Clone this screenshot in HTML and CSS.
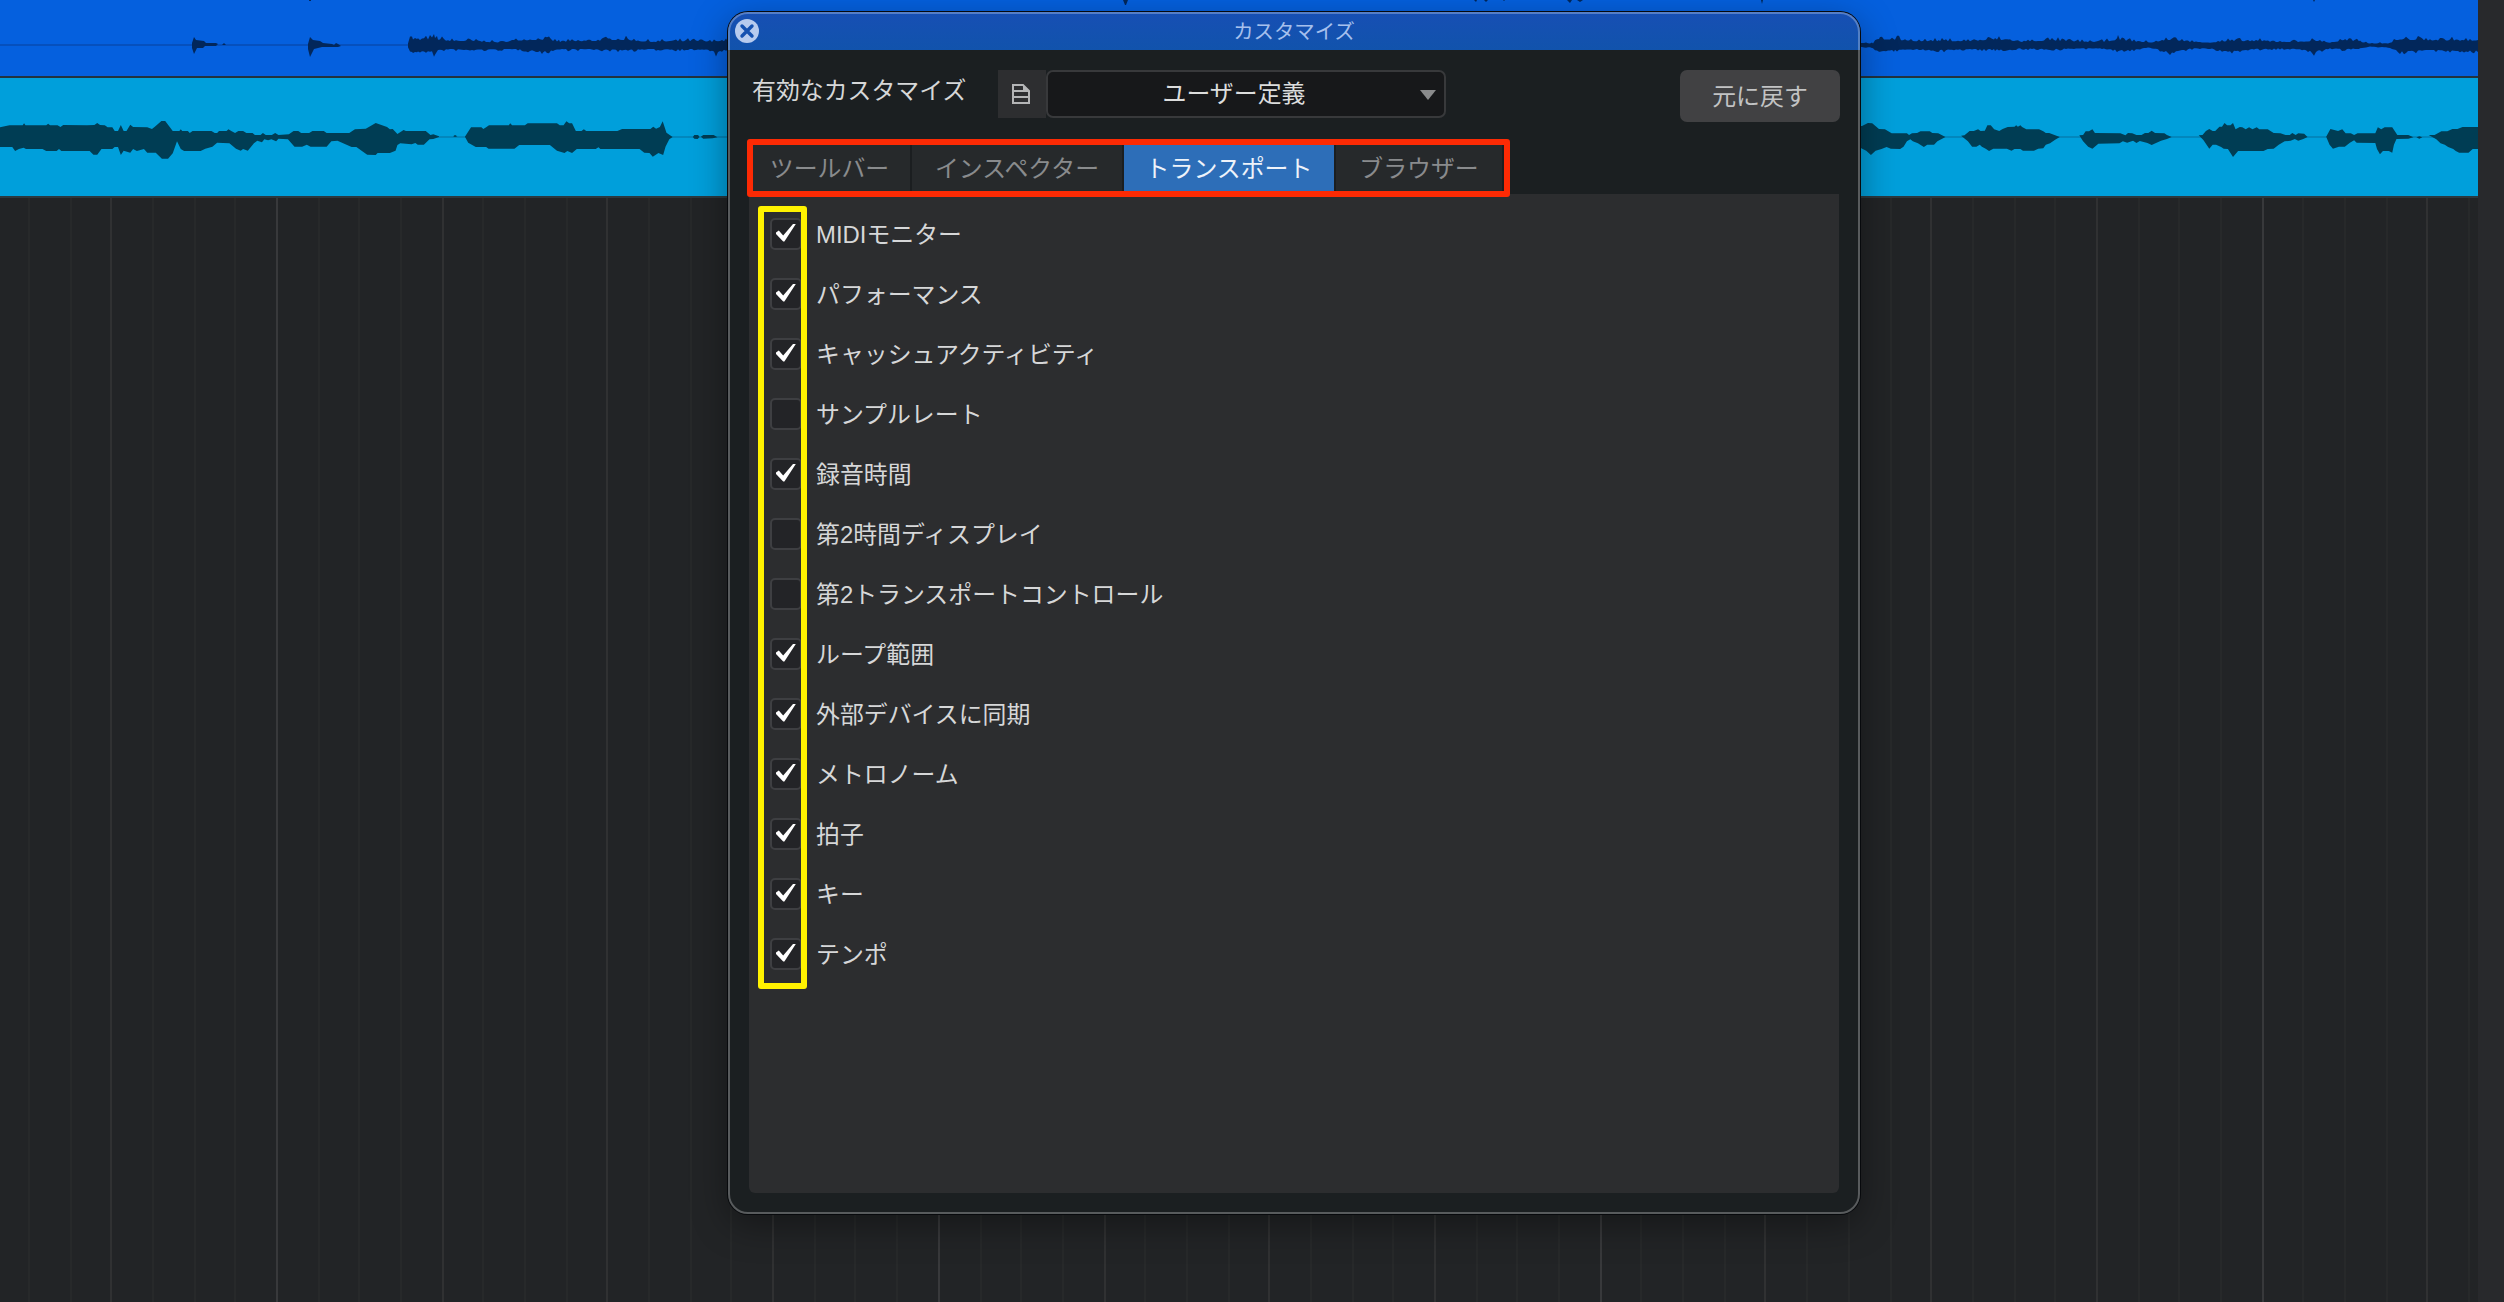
FILE: index.html
```
<!DOCTYPE html>
<html lang="ja">
  <head>
    <meta charset="utf-8">
    <title>カスタマイズ</title>
    <link rel="stylesheet" href="styles.css">
  </head>
  <body onload="start()">
    <svg class="symbols" width="0" height="0">
      <symbol id="check" viewBox="0 0 28 28">
        <path d="M4 12.4 L6.8 10.6 L11.2 15.6 L21 4 L23.8 4 L12.4 21.4 L11.2 21.4 L4 14 Z" fill="#fff"/>
      </symbol>
    </svg>

    <div id="arranger">
      <svg id="grid" width="2478" height="1302"></svg>
      <div class="track track_blue"></div>
      <div class="track track_cyan"></div>
      <div class="scroll_strip"></div>
      <svg id="waves" width="2478" height="198">
        <path d="M0 45 H2478" stroke="#0650bd" stroke-width="2"/>
        <path d="M0 137 H2478" stroke="#0287bd" stroke-width="2"/>
        <path id="noise" fill="#02275b"/>
        <g fill="#02275b">
          <path d="M192 43 L194 37 L196 40 L204 41 L206 43 L216 43 L218 44 L216 46 L205 46 L203 48 L197 48 L194 54 L192 48 Z"/>
          <path d="M222 45 L224 43 L226 45 Z"/>
          <path d="M308 44 L310 37 L313 40 L320 41 L323 43 L332 44 L334 45 L336 43 L338 44 L341 46 L338 47 L322 47 L314 49 L310 57 L308 49 Z"/>
          <path d="M309 0 h2 v1 h-2 Z M1123 0 h5 l-2 5 h-1 Z M1474 0 h3 l-1 2 Z M1484 0 h4 l-2 2 Z M1503 0 h2 l-1 1 Z M1567 0 h5 l-2 3 Z M1577 0 h6 l-3 2 Z M1761 0 h2 l-1 4 Z M2313 0 h2 l-1 2 Z"/>
        </g>
        <g fill="#003d54">
          <g transform="scale(.472 .3333)">
            <path d="M0 382 L20 376 48 376 51 370 54 376 98 376 102 371 106 376 122 376 128 381 134 375 184 376 200 375 206 369 212 375 222 376 228 382 238 382 243 393 250 393 256 375 262 393 268 393 276 374 282 381 312 382 322 387 328 380 342 363 350 363 366 393 380 393 383 388 386 393 398 393 402 399 408 393 448 393 455 399 460 399 464 393 480 393 484 388 490 393 498 399 505 393 515 393 522 399 535 399 540 405 552 405 557 399 563 405 576 405 583 399 590 405 612 403 622 393 632 393 638 399 655 399 662 393 686 393 692 399 740 399 752 388 775 386 796 369 820 381 826 388 832 387 842 402 855 390 860 393 902 393 912 405 918 403 930 409 930 411 918 417 910 418 898 434 885 434 880 429 872 433 848 430 842 435 838 452 826 459 800 459 796 465 778 464 755 441 745 441 715 422 702 424 692 440 658 440 650 434 640 440 624 440 610 418 590 416 585 424 575 418 568 421 560 418 555 427 545 422 538 430 525 452 515 447 510 452 500 446 486 430 460 428 450 440 435 446 425 453 390 453 383 447 375 424 366 460 356 476 343 476 330 458 312 458 305 447 290 453 282 447 276 458 262 452 256 465 250 441 243 441 238 447 215 447 206 464 198 464 190 453 130 453 125 447 120 453 98 453 90 447 55 447 50 443 40 447 32 453 26 441 0 441 Z"/>
            <path d="M960 409 L964 405 969 409 964 411 Z"/>
            <path d="M985 410 L998 382 1020 382 1024 387 1030 382 1036 376 1078 376 1081 370 1085 376 1112 376 1118 370 1180 370 1186 376 1194 376 1200 364 1206 370 1212 370 1220 393 1232 393 1237 388 1242 393 1308 393 1318 387 1378 387 1384 380 1390 386 1398 381 1404 364 1412 398 1425 411 1418 418 1410 440 1405 465 1395 459 1383 470 1376 459 1365 458 1355 447 1272 447 1268 442 1262 447 1222 447 1212 459 1202 453 1196 459 1180 452 1165 435 1100 435 1090 446 1035 446 1030 441 1008 441 992 428 Z"/>
            <path d="M1468 411 L1471 405 1479 405 1482 411 1478 417 1471 416 Z M1485 410 L1490 405 1512 405 1520 412 1510 415 1490 416 Z"/>
          </g>
          <g transform="translate(1840) scale(.4235 .3333)">
            <path d="M40 378 L52 378 66 369 76 370 92 387 106 388 122 400 158 400 163 405 170 400 182 399 190 394 212 394 218 399 232 400 249 411 230 424 222 434 206 434 198 441 184 430 172 424 166 418 158 424 150 440 142 447 120 446 110 441 98 447 84 452 73 465 62 452 50 445 Z"/>
            <path d="M286 407 L294 406 306 393 316 393 326 388 332 393 342 392 348 376 356 376 364 388 376 393 384 387 396 381 412 380 416 376 420 380 426 376 430 381 440 388 470 388 480 394 486 399 494 399 508 406 519 411 508 419 496 430 486 434 480 445 468 446 458 452 432 452 426 447 412 447 405 452 394 446 362 446 352 453 344 446 335 440 330 434 322 440 312 440 302 424 Z"/>
            <path d="M565 406 L574 405 580 394 588 394 596 388 602 399 662 400 674 406 680 399 690 400 700 405 712 405 720 399 728 399 736 392 744 399 766 400 772 405 783 411 772 417 758 422 745 430 736 435 726 429 708 423 700 429 692 422 678 428 668 424 660 430 610 431 596 446 586 440 574 424 Z"/>
            <path d="M847 406 L856 405 864 393 872 387 880 393 886 393 896 380 902 380 908 369 914 376 922 376 928 369 934 388 944 381 950 382 958 388 966 382 974 388 984 382 990 388 1010 388 1024 399 1040 400 1052 405 1062 405 1068 399 1076 405 1082 400 1096 401 1104 411 1094 417 1082 422 1074 417 1064 422 1050 424 1036 434 1024 446 1010 447 1000 453 940 453 928 471 916 447 906 446 900 441 888 434 880 434 872 446 858 420 Z"/>
            <path d="M1148 410 L1158 387 1176 393 1186 388 1194 400 1206 400 1214 405 1222 400 1264 400 1270 382 1278 388 1286 382 1304 382 1316 405 1342 405 1354 412 1342 416 1314 417 1308 434 1304 458 1296 453 1282 453 1275 463 1268 447 1264 429 1220 428 1214 421 1204 428 1192 440 1178 440 1164 446 1156 434 Z"/>
            <path d="M1361 412 L1368 409 1375 412 1368 416 Z"/>
            <path d="M1390 405 L1404 405 1420 394 1434 394 1446 387 1458 387 1470 381 1507 381 1507 447 1494 447 1484 458 1462 458 1454 453 1448 447 1436 441 1428 434 1418 430 1408 418 Z"/>
          </g>
        </g>
      </svg>
    </div>

    <div id="dialog">
      <div class="titlebar">
        <svg class="close" width="24" height="24" viewBox="0 0 24 24">
          <circle cx="12" cy="12" r="12" fill="#b7cbee"/>
          <path d="M7 7 L17 17 M17 7 L7 17" stroke="#1551b0" stroke-width="3.4" stroke-linecap="round"/>
        </svg>
        <span>カスタマイズ</span>
      </div>
      <div class="header">
        <span class="header_label">有効なカスタマイズ</span>
        <div class="preset_menu">
          <svg width="18" height="20" viewBox="0 0 18 20" fill="none" stroke="#b4b5b6" stroke-width="2">
            <path d="M1 1 H11 L17 7 V19 H1 Z M1 13 H17 M1 7 H17"/>
            <path d="M11 1 V7 H17 Z" fill="#b4b5b6" stroke="none"/>
          </svg>
        </div>
        <div class="preset">
          <span>ユーザー定義</span>
          <svg class="arrow" width="16" height="10" viewBox="0 0 16 10"><path d="M0 0 H16 L8 10 Z" fill="#8a8b8c"/></svg>
        </div>
        <div class="reset">元に戻す</div>
      </div>
      <div class="tabs">
        <div class="tab tab_toolbar">ツールバー</div>
        <div class="tab tab_inspector">インスペクター</div>
        <div class="tab tab_transport active">トランスポート</div>
        <div class="tab tab_browser">ブラウザー</div>
        <div class="mark mark_red"></div>
      </div>
      <div class="list">
        <div class="option"><span class="box"><svg><use href="#check"/></svg></span><span class="name">MIDIモニター</span></div>
        <div class="option"><span class="box"><svg><use href="#check"/></svg></span><span class="name">パフォーマンス</span></div>
        <div class="option"><span class="box"><svg><use href="#check"/></svg></span><span class="name">キャッシュアクティビティ</span></div>
        <div class="option"><span class="box"></span><span class="name">サンプルレート</span></div>
        <div class="option"><span class="box"><svg><use href="#check"/></svg></span><span class="name">録音時間</span></div>
        <div class="option"><span class="box"></span><span class="name">第2時間ディスプレイ</span></div>
        <div class="option"><span class="box"></span><span class="name">第2トランスポートコントロール</span></div>
        <div class="option"><span class="box"><svg><use href="#check"/></svg></span><span class="name">ループ範囲</span></div>
        <div class="option"><span class="box"><svg><use href="#check"/></svg></span><span class="name">外部デバイスに同期</span></div>
        <div class="option"><span class="box"><svg><use href="#check"/></svg></span><span class="name">メトロノーム</span></div>
        <div class="option"><span class="box"><svg><use href="#check"/></svg></span><span class="name">拍子</span></div>
        <div class="option"><span class="box"><svg><use href="#check"/></svg></span><span class="name">キー</span></div>
        <div class="option"><span class="box"><svg><use href="#check"/></svg></span><span class="name">テンポ</span></div>
        <div class="mark mark_yellow"></div>
      </div>
    </div>
    <script>
      const beat = 41.3625;
      const center = 45;

      // x, height above and below the center line
      const envelope = [
        [408, 2, 2], [410, 11, 8], [413, 7, 8], [418, 6, 8], [432, 8, 7], [435, 9, 12], [438, 7, 6],
        [450, 5, 5], [470, 5, 6], [500, 3, 5], [520, 6, 5], [543, 7, 8], [560, 4, 5], [590, 5, 5],
        [620, 7, 6], [650, 4, 5], [690, 5, 5], [712, 4, 6], [716, 5, 10], [722, 5, 6], [740, 4, 6],
        [1850, 3, 2], [1873, 2, 3], [1880, 7, 8], [1895, 7, 6], [1915, 5, 5], [1940, 5, 6], [1970, 5, 5],
        [1995, 7, 5], [2010, 6, 6], [2020, 4, 4], [2050, 6, 5], [2080, 4, 4], [2105, 4, 4], [2118, 7, 6],
        [2130, 5, 6], [2150, 3, 3], [2172, 7, 9], [2190, 4, 4], [2210, 3, 4], [2228, 5, 8], [2250, 5, 5],
        [2280, 4, 4], [2298, 4, 5], [2312, 5, 7], [2314, 5, 10], [2318, 5, 7], [2330, 3, 4], [2345, 6, 5],
        [2360, 4, 4], [2370, 2, 2], [2388, 2, 3], [2400, 7, 8], [2430, 6, 6], [2450, 6, 7], [2478, 5, 7]
      ];

      let seed = 7;

      function random() {
        seed = (seed * 16807) % 2147483647;

        return seed / 2147483647;
      }

      function draw_grid() {
        let lines = '';

        for (let i = -6; i < 54; i++) {
          const x = Math.floor((276.9 + i * beat) / 2) * 2;
          let color = '#27292a';

          if (i % 16 === 0) {
            color = '#38393b';
          }
          else if (i % 4 === 0) {
            color = '#303132';
          }

          lines += `<rect x="${x}" y="0" width="2" height="1302" fill="${color}"/>`;
        }

        document.getElementById('grid').innerHTML = lines;
      }

      function draw_noise() {
        const top = [];
        const bottom = [];

        for (let i = 1; i < envelope.length; i++) {
          const a = envelope[i - 1];
          const b = envelope[i];

          for (let x = a[0]; x < b[0]; x += 2) {
            const t = (x - a[0]) / (b[0] - a[0]);
            const up = (a[1] + (b[1] - a[1]) * t) * (0.75 + 0.7 * Math.pow(random(), 3));
            const down = (a[2] + (b[2] - a[2]) * t) * (0.8 + 0.45 * Math.pow(random(), 3));

            top.push(`${x} ${(center - up).toFixed(1)}`);
            bottom.unshift(`${x} ${(center + down).toFixed(1)}`);
          }
        }

        document.getElementById('noise').setAttribute('d', 'M' + top.concat('2478 40', '2478 52', bottom).join(' L') + ' Z');
      }

      function start() {
        draw_grid();
        draw_noise();
      }
    </script>
  </body>
</html>
```
FILE: styles.css
```
body {
  margin: 0;
  width: 2504px;
  height: 1302px;
  overflow: hidden;
  position: relative;
  background: #222426;
  color: #d6d7d8;
  font-family: 'Liberation Sans', 'Noto Sans CJK JP', sans-serif;
  font-size: 23.9px;
}

.symbols {
  position: absolute;
}

#arranger {
  height: 1302px;
}

#grid,
#waves {
  position: absolute;
  left: 0;
  top: 0;
}

.track {
  position: relative;
  width: 2478px;
  border-bottom: 2px solid #22333f;
}

.track_blue {
  height: 76px;
  background: #0560de;
}

.track_cyan {
  height: 118px;
  background: #009fdb;
  border-bottom-color: #2b393f;
}

.scroll_strip {
  position: absolute;
  right: 0;
  top: 0;
  width: 26px;
  height: 1302px;
  background: #28292c;
}

#dialog {
  position: absolute;
  left: 728px;
  top: 12px;
  width: 1132px;
  height: 1202px;
  border-radius: 20px;
  background: #1b1f21;
  box-shadow: 0 0 0 1px #07090c, 0 10px 36px rgba(0, 0, 0, 0.38);
}

#dialog::after {
  content: "";
  position: absolute;
  inset: 0;
  border: 2px solid rgba(255, 255, 255, 0.27);
  border-radius: 20px;
  pointer-events: none;
}

.titlebar {
  display: flex;
  align-items: center;
  justify-content: center;
  position: relative;
  box-sizing: border-box;
  height: 38px;
  padding-top: 2px;
  border-radius: 20px 20px 0 0;
  background: linear-gradient(#174fb4, #1153ac);
  color: #a6c0ed;
  font-size: 20.4px;
  line-height: 36px;
}

.close {
  position: absolute;
  left: 7px;
  top: 7px;
}

.header {
  display: flex;
  align-items: flex-start;
  padding: 20px 20px 0 24px;
  height: 57px;
}

.header_label {
  width: 246px;
  line-height: 42px;
}

.preset_menu {
  display: flex;
  align-items: center;
  justify-content: center;
  box-sizing: border-box;
  width: 48px;
  height: 48px;
  padding-right: 2px;
  background: #2d2e30;
}

.preset {
  display: flex;
  align-items: center;
  box-sizing: border-box;
  width: 400px;
  height: 48px;
  padding: 0 8px 0 0;
  border: 2px solid #38393b;
  border-radius: 7px;
  background: #17181a;
  color: #dcdddd;
}

.preset span {
  flex: 1;
  line-height: 44px;
  text-align: center;
}

.arrow {
  padding-top: 1px;
}

.reset {
  width: 160px;
  height: 52px;
  margin-left: auto;
  border-radius: 7px;
  background: #414143;
  color: #c2c3c4;
  line-height: 54px;
  text-align: center;
}

.tabs {
  display: flex;
  position: relative;
  margin: 16px 0 0 21px;
  height: 51px;
  z-index: 1;
}

.tab {
  box-sizing: border-box;
  height: 48px;
  border-right: 2px solid #1b1e20;
  background: #26292b;
  color: #898b8d;
  line-height: 51px;
  text-align: center;
}

.tab_toolbar {
  width: 163px;
}

.tab_inspector {
  width: 212px;
}

.tab_transport {
  width: 212px;
}

.tab_browser {
  width: 168px;
}

.tab.active {
  background: #2d6eb8;
  color: #eef3fa;
}

.list {
  position: relative;
  box-sizing: border-box;
  width: 1090px;
  height: 999px;
  margin-left: 21px;
  padding: 10px 0 0 21px;
  border-radius: 0 0 6px 6px;
  background: #2c2d2f;
}

.option {
  display: flex;
  align-items: center;
  gap: 14px;
  height: 60px;
}

.name {
  padding-bottom: 4px;
}

.box {
  box-sizing: border-box;
  width: 32px;
  height: 32px;
  border: 2px solid #3e3f42;
  border-radius: 5px;
  background: #232427;
}

.box svg {
  display: block;
  width: 28px;
  height: 28px;
}

/* highlight frames drawn over the tabs and the checkboxes */
.mark {
  position: absolute;
  box-sizing: border-box;
  border-radius: 3px;
}

.mark_red {
  left: -2px;
  top: -4px;
  width: 763px;
  height: 58px;
  border: 6px solid #fc2a04;
}

.mark_yellow {
  left: 9px;
  top: 12px;
  width: 49px;
  height: 783px;
  border: 6px solid #fff200;
}
```
